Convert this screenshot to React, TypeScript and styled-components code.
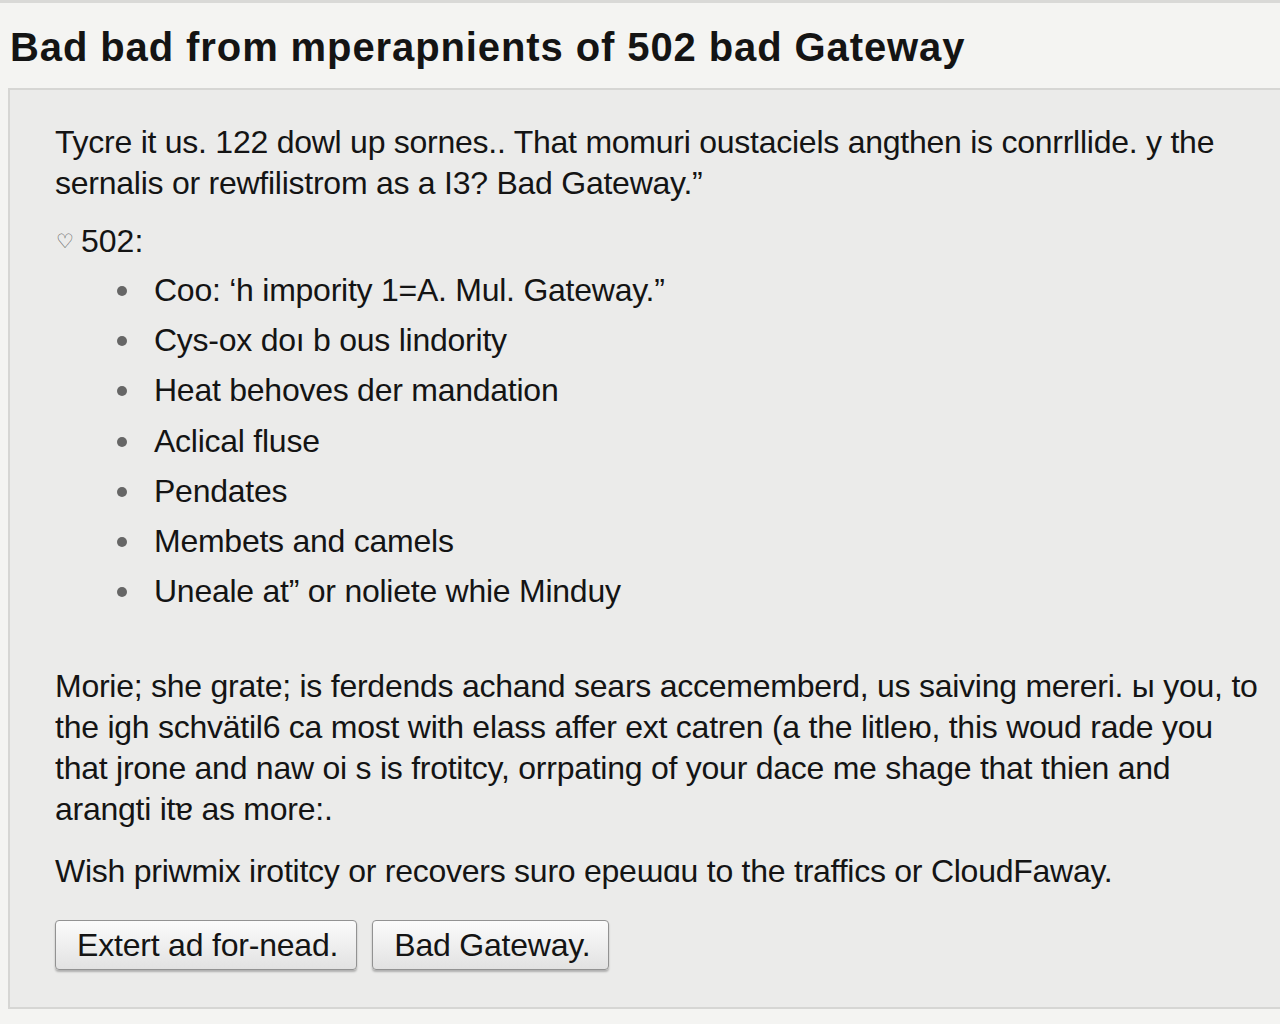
import React from "react";
import styled, { createGlobalStyle } from "styled-components";

const GlobalStyle = createGlobalStyle`
  html, body {
    margin: 0;
    padding: 0;
    background: #f4f4f2;
    color: #141414;
    font-family: "Liberation Sans", Arial, sans-serif;
  }
`;

const Page = styled.div`
  width: 1280px;
  min-height: 1024px;
  box-sizing: border-box;
  border-top: 3px solid #d9d9d7;
  overflow: hidden;
`;

const Title = styled.h1`
  margin: 0;
  padding: 21px 0 0 10px;
  height: 64px;
  font-size: 40px;
  font-weight: bold;
  letter-spacing: 0.9px;
  line-height: 46px;
`;

const Panel = styled.section`
  margin: 0 -4px 0 8px;
  box-sizing: border-box;
  height: 921px;
  background: #ebebea;
  border: 2px solid #d6d6d4;
  border-right: none;
  padding: 32px 30px 0 45px;
`;

const Para = styled.p<{ $gap?: number }>`
  margin: 0 0 ${(p) => p.$gap ?? 0}px;
  font-size: 32px;
  line-height: 41px;
  letter-spacing: -0.25px;
  white-space: nowrap;
`;

const Label = styled.div`
  display: flex;
  align-items: center;
  gap: 7px;
  margin: 17px 0 4px;
  font-size: 32px;
  line-height: 40px;
`;

const Heart = styled.span`
  font-size: 20px;
  color: #5e5e5e;
  margin-left: 1px;
`;

const List = styled.ul`
  margin: 0 0 50px;
  padding: 0 0 0 99px;
  list-style: none;
`;

const Item = styled.li`
  position: relative;
  font-size: 32px;
  line-height: 50.2px;
  letter-spacing: -0.25px;

  &::before {
    content: "";
    position: absolute;
    left: -37px;
    top: 21px;
    width: 10px;
    height: 10px;
    border-radius: 50%;
    background: #666;
  }
`;

const Buttons = styled.div`
  display: flex;
  gap: 15px;
  margin-top: 28px;
`;

const Button = styled.button`
  height: 50px;
  padding: 0 18px 0 21px;
  font-family: "Liberation Sans", Arial, sans-serif;
  font-size: 32px;
  letter-spacing: -0.2px;
  color: #141414;
  background: linear-gradient(#fbfbfb, #e2e2e2);
  border: 1.5px solid #929292;
  border-radius: 4px;
  box-shadow: 0 2px 2px rgba(0, 0, 0, 0.25);
`;

const items = [
  "Coo: ‘h impority 1=A. Mul. Gateway.”",
  "Cys-ox doı b ous lindority",
  "Heat behoves der mandation",
  "Aclical fluse",
  "Pendates",
  "Membets and camels",
  "Uneale at” or noliete whie Minduy",
];

export default function App() {
  return (
    <Page>
      <GlobalStyle />
      <Title>Bad bad from mperapnients of 502 bad Gateway</Title>
      <Panel>
        <Para>
          Tycre it us. 122 dowl up sornes.. That momuri oustaciels angthen is conrrllide. y the
          <br />
          sernalis or rewfilistrom as a I3? Bad Gateway.”
        </Para>
        <Label>
          <Heart>♡</Heart>
          <span>502:</span>
        </Label>
        <List>
          {items.map((t) => (
            <Item key={t}>{t}</Item>
          ))}
        </List>
        <Para $gap={21}>
          Morie; she grate; is ferdends achand sears accememberd, us saiving mereri. ы you, to
          <br />
          the igh schvätil6 ca most with elass affer ext catren (a the litleю, this woud rade you
          <br />
          that jrone and naw oi s is frotitcy, orrpating of your dace me shage that thien and
          <br />
          arangti itɐ as more:.
        </Para>
        <Para>Wish priwmix irotitcy or recovers suro epeɯɑu to the traffics or CloudFaway.</Para>
        <Buttons>
          <Button>Extert ad for-nead.</Button>
          <Button>Bad Gateway.</Button>
        </Buttons>
      </Panel>
    </Page>
  );
}
